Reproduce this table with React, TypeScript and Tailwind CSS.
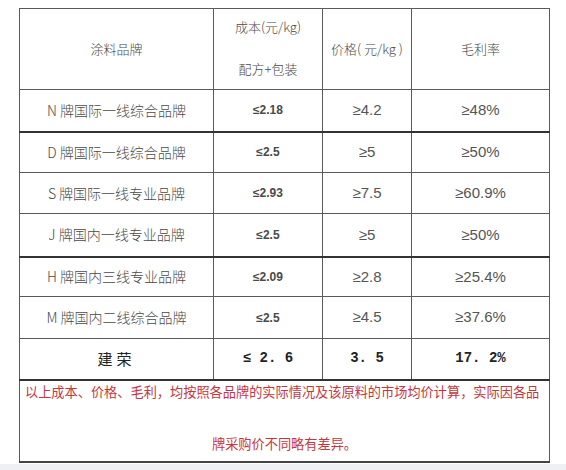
const rows = [
  { name: 'N 牌国际一线综合品牌', cost: '≤2.18', price: '≥4.2', margin: '≥48%', h: 'h-[42px]', thick: true },
  { name: 'D 牌国际一线综合品牌', cost: '≤2.5', price: '≥5', margin: '≥50%', h: 'h-[41px]', thick: false },
  { name: 'S 牌国际一线专业品牌', cost: '≤2.93', price: '≥7.5', margin: '≥60.9%', h: 'h-[41px]', thick: false },
  { name: 'J 牌国内一线专业品牌', cost: '≤2.5', price: '≥5', margin: '≥50%', h: 'h-[43px]', thick: true },
  { name: 'H 牌国内三线专业品牌', cost: '≤2.09', price: '≥2.8', margin: '≥25.4%', h: 'h-[40px]', thick: false },
  { name: 'M 牌国内二线综合品牌', cost: '≤2.5', price: '≥4.5', margin: '≥37.6%', h: 'h-[42px]', thick: false },
]

const cjk = { fontFamily: '"Noto Sans CJK SC", "Noto Sans", sans-serif' }
const latin = { fontFamily: '"Liberation Sans", "DejaVu Sans", "Noto Sans CJK SC", sans-serif' }
const mono = { fontFamily: '"Liberation Mono", "DejaVu Sans Mono", monospace' }

export default function App() {
  return (
    <div className="w-[566px] h-[470px] bg-white overflow-hidden relative" style={cjk}>
      <div className="pt-[8px] pl-[19px]">
        <table className="border-collapse table-fixed w-[530px] text-[#4a4a4a]">
          <colgroup>
            <col className="w-[194px]" />
            <col className="w-[109px]" />
            <col className="w-[89px]" />
            <col className="w-[138px]" />
          </colgroup>
          <tbody>
            <tr className="h-[81px] text-[13px] font-light">
              <td className="border border-[#5a5a5a] text-center">涂料品牌</td>
              <td className="border border-[#5a5a5a] text-center">
                <div className="leading-[20px] -mt-[2px]">成本(元/kg)</div>
                <div className="leading-[20px] mt-[22px]">配方+包装</div>
              </td>
              <td className="border border-[#5a5a5a] text-center">价格( 元/kg )</td>
              <td className="border border-[#5a5a5a] text-center">毛利率</td>
            </tr>
            {rows.map((r) => (
              <tr key={r.name} className={r.h}>
                <td className={`border border-[#5a5a5a] text-center text-[14px] font-light ${r.thick ? 'border-b-2 border-b-[#333]' : ''}`}>
                  {r.name}
                </td>
                <td
                  className={`border border-[#5a5a5a] text-center text-[12px] font-bold ${r.thick ? 'border-b-2 border-b-[#333]' : ''}`}
                  style={latin}
                >
                  {r.cost}
                </td>
                <td
                  className={`border border-[#5a5a5a] text-center text-[15px] text-[#555] ${r.thick ? 'border-b-2 border-b-[#333]' : ''}`}
                  style={latin}
                >
                  {r.price}
                </td>
                <td
                  className={`border border-[#5a5a5a] text-center text-[15px] text-[#555] ${r.thick ? 'border-b-2 border-b-[#333]' : ''}`}
                  style={latin}
                >
                  {r.margin}
                </td>
              </tr>
            ))}
            <tr className="h-[41px] text-[#222]">
              <td className="border border-[#5a5a5a] border-b-2 border-b-[#333] text-center text-[15px] tracking-[4px]">建荣</td>
              <td className="border border-[#5a5a5a] border-b-2 border-b-[#333] text-center text-[14px] font-bold" style={mono}>
                ≤ 2. 6
              </td>
              <td className="border border-[#5a5a5a] border-b-2 border-b-[#333] text-center text-[14px] font-bold" style={mono}>
                3. 5
              </td>
              <td className="border border-[#5a5a5a] border-b-2 border-b-[#333] text-center text-[14px] font-bold" style={mono}>
                17. 2%
              </td>
            </tr>
            <tr className="h-[82px]">
              <td colSpan={4} className="border border-[#5a5a5a] border-b-2 border-b-[#444] align-top text-[#c8353d] text-[13.2px] px-[5px]">
                <div className="leading-[20px] pt-[1px] whitespace-nowrap">
                  以上成本、价格、毛利，均按照各品牌的实际情况及该原料的市场均价计算，实际因各品
                </div>
                <div className="leading-[20px] mt-[32px] text-center">牌采购价不同略有差异。</div>
              </td>
            </tr>
          </tbody>
        </table>
      </div>
      <div className="absolute left-0 bottom-0 w-[566px] h-[6px] bg-[#eef0f3]" />
    </div>
  )
}
